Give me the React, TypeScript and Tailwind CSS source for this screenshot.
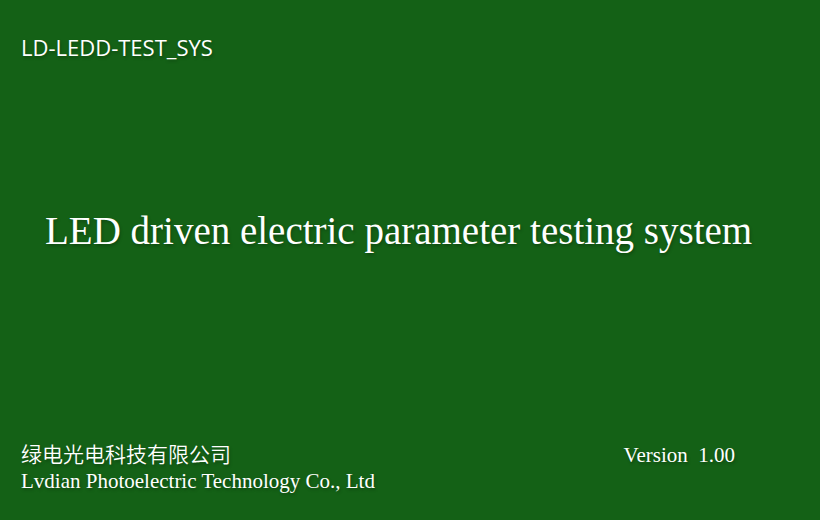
export default function App() {
  return (
    <main className="flex min-h-screen flex-col justify-between bg-[#146116] px-[21px] pt-[31px] pb-[26px] font-['Liberation_Serif','Noto_Sans_CJK_SC',serif] text-white [text-shadow:1px_2px_3px_rgba(0,0,0,0.25)]">
      <p className="font-['Open_Sans','Noto_Sans',sans-serif] text-[22px] leading-8">LD-LEDD-TEST_SYS</p>
      <h1 className="px-6 pb-[42px] text-[39px] leading-12 whitespace-nowrap">LED driven electric parameter testing system</h1>
      <footer className="flex items-start justify-between pr-16">
        <div className="flex flex-col gap-[2px] text-[21px] leading-[26px]">
          <p lang="zh-CN" className="font-['Noto_Sans_CJK_SC',sans-serif] font-[350]">绿电光电科技有限公司</p>
          <p>Lvdian Photoelectric Technology Co., Ltd</p>
        </div>
        <p className="text-[21px] leading-[30px] whitespace-pre">Version  1.00</p>
      </footer>
    </main>
  );
}
